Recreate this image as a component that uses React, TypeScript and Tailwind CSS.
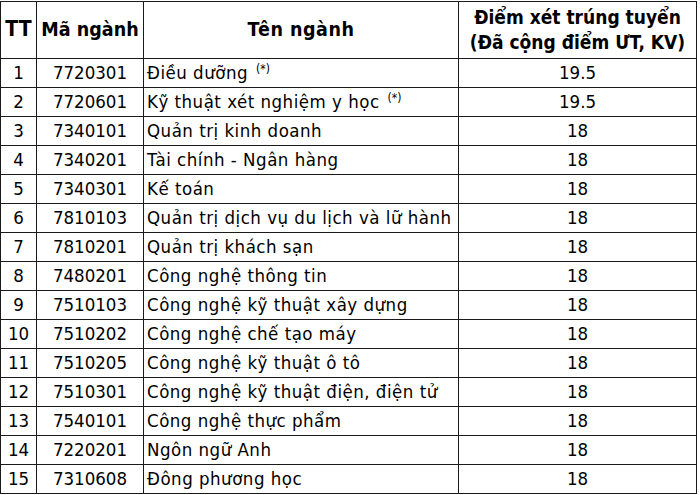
import React from 'react';

type Row = { tt: number; ma: string; ten: string; diem: string; note?: boolean };

const rows: Row[] = [
  { tt: 1, ma: '7720301', ten: 'Điều dưỡng', diem: '19.5', note: true },
  { tt: 2, ma: '7720601', ten: 'Kỹ thuật xét nghiệm y học', diem: '19.5', note: true },
  { tt: 3, ma: '7340101', ten: 'Quản trị kinh doanh', diem: '18' },
  { tt: 4, ma: '7340201', ten: 'Tài chính - Ngân hàng', diem: '18' },
  { tt: 5, ma: '7340301', ten: 'Kế toán', diem: '18' },
  { tt: 6, ma: '7810103', ten: 'Quản trị dịch vụ du lịch và lữ hành', diem: '18' },
  { tt: 7, ma: '7810201', ten: 'Quản trị khách sạn', diem: '18' },
  { tt: 8, ma: '7480201', ten: 'Công nghệ thông tin', diem: '18' },
  { tt: 9, ma: '7510103', ten: 'Công nghệ kỹ thuật xây dựng', diem: '18' },
  { tt: 10, ma: '7510202', ten: 'Công nghệ chế tạo máy', diem: '18' },
  { tt: 11, ma: '7510205', ten: 'Công nghệ kỹ thuật ô tô', diem: '18' },
  { tt: 12, ma: '7510301', ten: 'Công nghệ kỹ thuật điện, điện tử', diem: '18' },
  { tt: 13, ma: '7540101', ten: 'Công nghệ thực phẩm', diem: '18' },
  { tt: 14, ma: '7220201', ten: 'Ngôn ngữ Anh', diem: '18' },
  { tt: 15, ma: '7310608', ten: 'Đông phương học', diem: '18' },
];

const cell = 'border border-[#1a1a1a] p-0';

export default function App() {
  return (
    <div className="w-[700px] h-[495px] bg-white pt-px font-['DejaVu_Sans_Condensed','DejaVu_Sans',sans-serif] text-black">
      <table className="table-fixed border-collapse w-[696px]">
        <colgroup>
          <col className="w-[36px]" />
          <col className="w-[107px]" />
          <col className="w-[315px]" />
          <col className="w-[238px]" />
        </colgroup>
        <thead>
          <tr className="h-[57px] font-bold text-[19.5px]">
            <th className={`${cell} text-[21px]`}>TT</th>
            <th className={cell}>Mã ngành</th>
            <th className={`${cell} tracking-[0.5px]`}>Tên ngành</th>
            <th className={`${cell} leading-[25px] text-[19px]`}>
              Điểm xét trúng tuyển
              <br />
              (Đã cộng điểm ƯT, KV)
            </th>
          </tr>
        </thead>
        <tbody className="text-[18.5px]">
          {rows.map((r) => (
            <tr key={r.tt} className="h-[29px]">
              <td className={`${cell} text-center`}>{r.tt}</td>
              <td className={`${cell} text-center`}>{r.ma}</td>
              <td className={`${cell} pl-[3px] whitespace-nowrap tracking-[0.5px]`}>
                {r.ten}
                {r.note && <sup className="text-[12px] ml-[8px] -top-[6px] tracking-normal">(*)</sup>}
              </td>
              <td className={`${cell} text-center`}>{r.diem}</td>
            </tr>
          ))}
        </tbody>
      </table>
    </div>
  );
}
